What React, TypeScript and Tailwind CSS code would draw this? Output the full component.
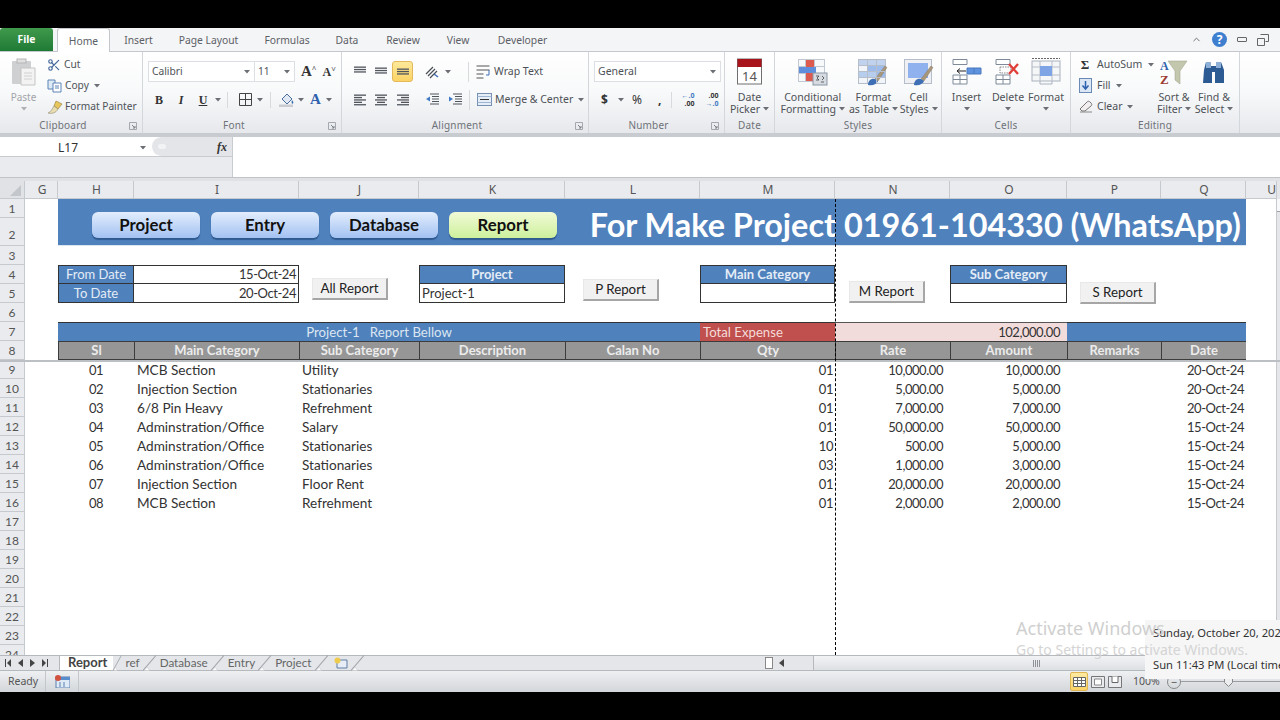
import type { ReactNode } from 'react';
import { Scissors, ChevronUp } from 'lucide-react';

const rows = [
  ['01', 'MCB Section', 'Utility', '01', '10,000.00', '10,000.00', '20-Oct-24'],
  ['02', 'Injection Section', 'Stationaries', '01', '5,000.00', '5,000.00', '20-Oct-24'],
  ['03', '6/8 Pin Heavy', 'Refrehment', '01', '7,000.00', '7,000.00', '20-Oct-24'],
  ['04', 'Adminstration/Office', 'Salary', '01', '50,000.00', '50,000.00', '15-Oct-24'],
  ['05', 'Adminstration/Office', 'Stationaries', '10', '500.00', '5,000.00', '15-Oct-24'],
  ['06', 'Adminstration/Office', 'Stationaries', '03', '1,000.00', '3,000.00', '15-Oct-24'],
  ['07', 'Injection Section', 'Floor Rent', '01', '20,000.00', '20,000.00', '15-Oct-24'],
  ['08', 'MCB Section', 'Refrehment', '01', '2,000.00', '2,000.00', '15-Oct-24'],
];
const emptyRows = [17, 18, 19, 20, 21, 22, 23, 24];
const colLetters = ['G', 'H', 'I', 'J', 'K', 'L', 'M', 'N', 'O', 'P', 'Q'];
const tabs = [
  ['Insert', 'w-[57px]'],
  ['Page Layout', 'w-[83px]'],
  ['Formulas', 'w-[74px]'],
  ['Data', 'w-[46px]'],
  ['Review', 'w-[66px]'],
  ['View', 'w-[44px]'],
  ['Developer', 'w-[85px]'],
];
const headers = ['Sl', 'Main Category', 'Sub Category', 'Description', 'Calan No', 'Qty', 'Rate', 'Amount', 'Remarks', 'Date'];
const noLauncher = ['Date', 'Styles', 'Cells', 'Editing'];

// Lato digits run wider than Calibri, so numbers get squeezed a little
const numCls = 'text-[13px] tracking-[-0.45px]';

function Caret({ className = '' }: { className?: string }) {
  return (
    <svg width="6" height="4" viewBox="0 0 6 4" className={`shrink-0 ${className}`}>
      <path d="M0 0h6L3 3.500z" fill="#6b6f75" />
    </svg>
  );
}

function Launcher() {
  return (
    <svg width="8" height="8" viewBox="0 0 8 8" className="absolute right-[5px] top-[4px]">
      <path d="M.5.5h7v7h-7z" fill="none" stroke="#a4a8ae" />
      <path d="M3 3l3 3M6 4v2H4" fill="none" stroke="#7d8188" />
    </svg>
  );
}

function Group({ label, width, children }: { label: string; width: string; children: ReactNode }) {
  const launcher = !noLauncher.includes(label);
  return (
    <div className={`${width} flex flex-col border-r border-[#d3d6db] shrink-0`}>
      <div className="h-[66px] flex">{children}</div>
      <div className={`h-[15px] relative text-center text-[10px] leading-[14px] text-[#6e7278] tracking-[0.2px] ${launcher ? 'pr-[16px]' : ''}`}>
        {label}
        {launcher && <Launcher />}
      </div>
    </div>
  );
}

function BigButton({ icon, top, bottom, width, caretLine }: { icon: ReactNode; top: string; bottom?: string; width: string; caretLine?: boolean }) {
  return (
    <div className={`${width} flex flex-col items-center pt-[6px] leading-[12px] text-[10.6px] text-[#4e5257]`}>
      <div className="h-[27px] flex items-center justify-center mb-[6px]">{icon}</div>
      <span>{top}</span>
      {caretLine ? (
        <Caret className="mt-[4px]" />
      ) : (
        <span className="flex items-center gap-[3px] whitespace-nowrap">
          {bottom}
          <Caret />
        </span>
      )}
    </div>
  );
}

function Lines({ rows }: { rows: [number, number][] }) {
  return (
    <svg width="14" height="12" viewBox="0 0 14 12">
      {rows.map(([x, w], i) => (
        <rect key={i} x={x} y={i * 2.4 + 0.5} width={w} height="1.3" fill="#50555c" />
      ))}
    </svg>
  );
}

const leftAlign: [number, number][] = [[1, 12], [1, 8], [1, 12], [1, 8], [1, 12]];
const centerAlign: [number, number][] = [[1, 12], [3, 8], [1, 12], [3, 8], [1, 12]];
const rightAlign: [number, number][] = [[1, 12], [5, 8], [1, 12], [5, 8], [1, 12]];

function IndentIcon({ flip }: { flip?: boolean }) {
  return (
    <svg width="15" height="13" viewBox="0 0 15 13">
      <path d="M5 1h9M7 3.500h7M7 6h7M7 8.500h7M5 11h9" stroke="#50555c" strokeWidth="1.200" fill="none" />
      <path d={flip ? 'M5 3.500v5L1 6z' : 'M1 3.500v5L5 6z'} fill="#3f78c4" />
    </svg>
  );
}

function GridIcon({ fill = '#dbe6f5', children }: { fill?: string; children?: ReactNode }) {
  return (
    <svg width="30" height="28" viewBox="0 0 30 28">
      <rect x=".5" y="1.500" width="27" height="24" fill={fill} stroke="#b6bec9" />
      {children}
      <path d="M.5 7.500h27M.5 13.500h27M.5 19.500h27M9.500 1.500v24M18.500 1.500v24" stroke="#b6bec9" fill="none" />
    </svg>
  );
}

const brush = (
  <>
    <path d="M17 21L27 8l2 1.500-9 13.500z" fill="#a8977a" stroke="#7d6e55" strokeWidth=".4" />
    <path d="M10 27c0-4 3-7 7-6l3 2c-1 3-5 5-10 4z" fill="#3f6fb5" />
  </>
);

function PlainButton({ label }: { label: string }) {
  return (
    <div className="w-[76px] h-[22px] bg-[#f1f1f1] border-r-2 border-b-2 border-[#a6a6a6] border-t border-l border-t-[#e8e8e8] border-l-[#e8e8e8] flex items-center justify-center text-[13.3px] text-[#222]">
      {label}
    </div>
  );
}

function NavButton({ label, active }: { label: string; active?: boolean }) {
  return (
    <div className={`w-[108px] h-[26px] rounded-[6px] flex items-center justify-center text-[16.8px] font-bold text-[#111] shadow-[0_2px_1px_#2f5a8f] ${active ? 'bg-gradient-to-b from-[#f1fad6] to-[#cdf09c]' : 'bg-gradient-to-b from-[#e3edfc] to-[#a3c2f2]'}`}>
      {label}
    </div>
  );
}

function Num({ n, className = 'items-center pt-[1px]' }: { n: number; className?: string }) {
  return (
    <div className={`bg-[#e9ebee] border-b border-r border-[#c6c9ce] flex justify-center text-[12px] text-[#555] ${className}`}>
      {n}
    </div>
  );
}

function SheetTab({ label, bold }: { label: string; bold?: boolean }) {
  return (
    <div className={`flex items-center h-full ${bold ? 'bg-white text-[13px] font-bold text-[#444] pl-[8px] pr-[6px]' : 'text-[11.7px] text-[#666] px-[3px]'}`}>
      {label}
    </div>
  );
}

function Slant({ width = 14 }: { width?: number }) {
  return (
    <svg width={width} height="16" viewBox="0 0 13 16" preserveAspectRatio="none" className="shrink-0">
      <path d="M0 15.500L12 .5" stroke="#9da1a7" fill="none" />
      <path d="M1 15.500h5L4 12z" fill="#fff" stroke="#c0c3c8" strokeWidth=".5" />
    </svg>
  );
}

export default function App() {
  return (
    <div className="w-[1280px] h-[720px] bg-black overflow-hidden flex flex-col font-['Noto_Sans',sans-serif]">
      <div className="h-[28px] shrink-0" />

      {/* tab strip */}
      <div className="h-[24px] shrink-0 bg-[#f4f5f6] border-b border-[#c4c7cc] flex items-end text-[10.3px] text-[#5c6066]">
        <div className="w-[53px] h-[23px] rounded-t-[3px] bg-gradient-to-b from-[#3f9a4c] to-[#1f7a35] text-white font-bold flex items-center justify-center">File</div>
        <div className="w-[53px] h-[24px] ml-[4px] -mb-px pt-[2px] bg-white border border-b-0 border-[#c4c7cc] rounded-t-[3px] flex items-center justify-center">Home</div>
        {tabs.map(([label, w]) => (
          <div key={label} className={`${w} h-[23px] pt-[2px] flex items-center justify-center`}>{label}</div>
        ))}
        <div className="ml-auto h-[23px] flex items-center gap-[10px] pr-[11px]">
          <ChevronUp size={11} strokeWidth={2} className="text-[#666]" />
          <div className="w-[15px] h-[15px] rounded-full bg-[#3f7fd0] text-white text-[12px] font-bold flex items-center justify-center">?</div>
          <div className="w-[10px] h-[5px] rounded-[1px] border border-[#666]" />
          <svg width="12" height="12" viewBox="0 0 12 12"><path d="M3.500.5h8v7h-3M.5 4.500h7v7h-7z" fill="none" stroke="#666" /></svg>
        </div>
      </div>

      {/* ribbon */}
      <div className="h-[81px] shrink-0 bg-gradient-to-b from-white via-[#f8f9fa] to-[#e6e8ec] flex text-[10.2px] text-[#4e5257]">
        <Group label="Clipboard" width="w-[143px]">
          <div className="w-[47px] flex flex-col items-center pt-[6px] text-[10px] text-[#a2a5a9] leading-[12px]">
            <svg width="26" height="28" viewBox="0 0 26 28" className="mb-[5px]">
              <rect x="1" y="3" width="19" height="23" rx="1" fill="#cfd0d2" />
              <rect x="6" y="1" width="9" height="4" fill="#e0e0e0" stroke="#b5b5b5" />
              <path d="M10 10h14v17H10z" fill="#f3f3f3" stroke="#c5c5c5" />
              <path d="M13 15h8M13 18h8M13 21h8" stroke="#d0d0d0" />
            </svg>
            <span>Paste</span>
            <Caret className="mt-[4px] opacity-50" />
          </div>
          <div className="flex flex-col pt-[2px]">
            <div className="h-[21px] flex items-center gap-[3px]"><Scissors size={14} className="text-[#44689c]" />Cut</div>
            <div className="h-[21px] flex items-center gap-[3px]">
              <svg width="15" height="14" viewBox="0 0 15 14"><path d="M1 1h7v9H1z" fill="#dfeaf7" stroke="#5d83b5" /><path d="M6 4h8v9H6z" fill="#fff" stroke="#5d83b5" /><path d="M8 7h4M8 9h4" stroke="#5d83b5" /></svg>
              Copy <Caret className="ml-[2px]" />
            </div>
            <div className="h-[21px] flex items-center gap-[2px] whitespace-nowrap">
              <svg width="16" height="14" viewBox="0 0 16 14"><path d="M9 1l6 3-4 5-4-3z" fill="#e8c65a" stroke="#8d7a3d" strokeWidth=".6" /><path d="M7 6l4 3c-2 4-6 5-10 4 3-1 4-4 6-7z" fill="#e9ddb0" stroke="#8f8a70" strokeWidth=".6" /></svg>
              Format Painter
            </div>
          </div>
        </Group>

        <Group label="Font" width="w-[199px]">
          <div className="flex flex-col pl-[5px] pt-[9px]">
            <div className="h-[21px] flex items-center">
              <div className="w-[107px] h-[21px] bg-white border border-[#dcdfe3] flex items-center justify-between pl-[3px] pr-[4px]">Calibri<Caret /></div>
              <div className="w-[40px] h-[21px] bg-white border border-l-0 border-[#dcdfe3] flex items-center justify-between pl-[3px] pr-[4px]">11<Caret /></div>
              <span className="ml-[6px] text-[15px] font-bold font-['Liberation_Serif',serif] text-[#333]">A<sup className="text-[8px]">^</sup></span>
              <span className="ml-[6px] text-[12px] font-bold font-['Liberation_Serif',serif] text-[#333]">A<sup className="text-[8px]">˅</sup></span>
            </div>
            <div className="h-[17px] mt-[9px] flex items-center text-[#333] font-['Liberation_Serif',serif] text-[12px]">
              <span className="w-[10px] ml-[6px] font-bold text-center">B</span>
              <span className="w-[10px] ml-[12px] font-bold italic text-center">I</span>
              <span className="w-[10px] ml-[12px] font-bold underline text-center">U</span>
              <Caret className="ml-[7px]" />
              <div className="w-px h-[16px] bg-[#d8dade] ml-[6px]" />
              <svg width="13" height="13" viewBox="0 0 13 13" className="ml-[11px]"><path d="M.5.5h12v12H.5zM6.500.5v12M.5 6.500h12" fill="none" stroke="#444" /></svg>
              <Caret className="ml-[5px]" />
              <div className="w-px h-[16px] bg-[#d8dade] ml-[7px]" />
              <svg width="16" height="15" viewBox="0 0 16 15" className="ml-[8px]"><path d="M3 7l5-5 5 5-5 5z" fill="#dfe8f3" stroke="#4c6f9e" /><path d="M13 8c1 1.500 2 2.500 1 3.500s-2-1-1-3.500z" fill="#3a6fb0" /><rect x="0" y="12.500" width="14" height="2.500" fill="#c9ccd1" /></svg>
              <Caret className="ml-[3px]" />
              <span className="ml-[6px] text-[15px] font-bold text-[#2f62ad]">A</span>
              <Caret className="ml-[5px]" />
            </div>
          </div>
        </Group>

        <Group label="Alignment" width="w-[247px]">
          <div className="flex flex-col pl-[7px] pt-[9px]">
            <div className="h-[21px] flex items-center">
              <div className="w-[21px] flex justify-center"><Lines rows={[[1, 12], [1, 12], [1, 12]]} /></div>
              <div className="w-[22px] flex justify-center pt-[3px]"><Lines rows={[[1, 12], [1, 12], [1, 12]]} /></div>
              <div className="w-[21px] h-[21px] rounded-[3px] bg-gradient-to-b from-[#fde99a] to-[#fbd365] border border-[#e3b95b] flex justify-center items-end pb-[1px]"><Lines rows={[[1, 12], [1, 12], [1, 12]]} /></div>
              <svg width="20" height="14" viewBox="0 0 20 14" className="ml-[11px]"><path d="M2 9l7-7M4 11l7-7M6 13l7-7" stroke="#4a4e55" strokeWidth="1.200" /><path d="M10 9l4 3" stroke="#3f6fb5" strokeWidth="1.500" /></svg>
              <Caret className="ml-[1px]" />
              <div className="w-px h-[20px] bg-[#d8dade] ml-[17px]" />
              <div className="flex items-center gap-[3px] ml-[7px] text-[10.5px]">
                <svg width="15" height="14" viewBox="0 0 15 14"><path d="M.5 1h13M.5 5h13M.5 9h7M.5 13h7" stroke="#555" fill="none" /><path d="M13 5v5h-3" stroke="#3f6fb5" fill="none" /></svg>
                Wrap Text
              </div>
            </div>
            <div className="h-[17px] mt-[9px] flex items-center">
              <div className="w-[21px] flex justify-center"><Lines rows={leftAlign} /></div>
              <div className="w-[22px] flex justify-center"><Lines rows={centerAlign} /></div>
              <div className="w-[21px] flex justify-center"><Lines rows={rightAlign} /></div>
              <div className="w-[23px] ml-[8px] flex justify-center"><IndentIcon flip /></div>
              <div className="w-[23px] flex justify-center"><IndentIcon /></div>
              <div className="w-px h-[20px] bg-[#d8dade] ml-[2px]" />
              <div className="flex items-center gap-[3px] ml-[7px] whitespace-nowrap text-[10.5px]">
                <svg width="15" height="13" viewBox="0 0 15 13"><rect x=".5" y=".5" width="14" height="12" fill="#e6eef8" stroke="#7690b4" /><path d="M3 6.500h9" stroke="#333" /><path d="M.5 3.500h14M.5 9.500h14" stroke="#9db4d3" /></svg>
                Merge &amp; Center <Caret className="ml-[2px]" />
              </div>
            </div>
          </div>
        </Group>

        <Group label="Number" width="w-[136px]">
          <div className="flex flex-col pl-[5px] pt-[9px]">
            <div className="w-[127px] h-[21px] bg-white border border-[#dcdfe3] flex items-center justify-between pl-[3px] pr-[4px] text-[10.5px]">General<Caret /></div>
            <div className="h-[17px] mt-[9px] flex items-center text-[#333] font-bold text-[12px]">
              <span className="ml-[7px] w-[8px]">$</span>
              <Caret className="ml-[9px]" />
              <span className="ml-[8px] text-[12px] font-normal">%</span>
              <span className="ml-[16px]">,</span>
              <div className="w-px h-[16px] bg-[#d8dade] ml-[10px]" />
              <div className="ml-[7px] w-[15px] text-[7px] leading-[8px] text-[#333] text-right whitespace-nowrap"><span className="block text-[#3f78c4]">←.0</span><span className="block">.00</span></div>
              <div className="ml-[9px] w-[15px] text-[7px] leading-[8px] text-[#333] text-right whitespace-nowrap"><span className="block">.00</span><span className="block text-[#3f78c4]">→.0</span></div>
            </div>
          </div>
        </Group>

        <Group label="Date" width="w-[50px]">
          <BigButton
            width="w-full"
            top="Date"
            bottom="Picker"
            icon={
              <svg width="26" height="27" viewBox="0 0 26 27">
                <rect x=".5" y="1" width="24" height="25" fill="#fff" stroke="#6f6f6f" />
                <rect x=".5" y="1" width="24" height="8" fill="#a8141c" />
                <text x="12.500" y="23" textAnchor="middle" fontSize="13" fill="#555" fontFamily="Noto Sans">14</text>
              </svg>
            }
          />
        </Group>

        <Group label="Styles" width="w-[167px]">
          <BigButton
            width="w-[76px]"
            top="Conditional"
            bottom="Formatting"
            icon={
              <svg width="30" height="28" viewBox="0 0 30 28">
                <rect x=".5" y="1.500" width="26" height="22" fill="#f7f8fa" stroke="#c2c8d1" />
                <path d="M.5 8.500h26M.5 15.500h26M7.500 1.500v22M16.500 1.500v22" stroke="#c2c8d1" />
                <rect x="8" y="2" width="8" height="21" fill="#dd5a4f" />
                <rect x="1" y="9" width="17" height="6" fill="#5f8fdc" />
                <rect x="15" y="15" width="14" height="12" fill="#d6dbe2" stroke="#8b95a3" />
                <path d="M18 18h3l-2 2 2 2h-3M24 18l2 2-2 2M23 24h3" stroke="#444" fill="none" strokeWidth=".8" />
              </svg>
            }
          />
          <BigButton
            width="w-[46px]"
            top="Format"
            bottom="as Table"
            icon={
              <GridIcon fill="#f1f4f8">
                <rect x="1" y="2" width="26" height="5" fill="#c0d2ee" />
                <rect x="10" y="8" width="17" height="11" fill="#9dbcec" />
                <rect x="1" y="14" width="18" height="5" fill="#b7cdee" />
                {brush}
              </GridIcon>
            }
          />
          <BigButton
            width="w-[45px]"
            top="Cell"
            bottom="Styles"
            icon={
              <svg width="30" height="28" viewBox="0 0 30 28">
                <rect x=".5" y="1.500" width="27" height="24" fill="#eef0f3" stroke="#b6bec9" />
                <rect x="4" y="5" width="20" height="15" fill="#8fb1ee" />
                {brush}
              </svg>
            }
          />
        </Group>

        <Group label="Cells" width="w-[129px]">
          <BigButton
            width="w-[49px]"
            top="Insert"
            caretLine
            icon={
              <svg width="30" height="28" viewBox="0 0 30 28">
                <path d="M1 1.500h14v5H1zM1 17h14v9H1zM8 17v9M1 21.500h14" fill="#fff" stroke="#7f8a98" />
                <path d="M15 10h14v6H15zM22 10v6" fill="#5f93e0" stroke="#4a78bd" />
                <path d="M5 13h9M5 13l3-2.500M5 13l3 2.500" stroke="#222" fill="none" />
              </svg>
            }
          />
          <BigButton
            width="w-[34px]"
            top="Delete"
            caretLine
            icon={
              <svg width="26" height="28" viewBox="0 0 26 28">
                <path d="M1 1.500h14v5H1zM1 17h14v9H1zM8 17v9M1 21.500h14" fill="#fff" stroke="#7f8a98" />
                <path d="M5 9h11v6H5z" fill="none" stroke="#888" strokeDasharray="1.500 1" />
                <path d="M14 6l9 10M23 6l-9 10" stroke="#e0413b" strokeWidth="2.400" />
              </svg>
            }
          />
          <BigButton
            width="w-[42px]"
            top="Format"
            caretLine
            icon={
              <svg width="30" height="28" viewBox="0 0 30 28">
                <rect x="1" y="3" width="28" height="20" fill="#f5f6f8" stroke="#a9b2be" />
                <path d="M9 3v20M21 3v20M1 9h28M1 17h28" stroke="#b6bec9" />
                <rect x="9" y="8" width="12" height="10" fill="#7ea4e6" />
                <path d="M1 .5h28" stroke="#666" strokeDasharray="2 1" />
                <path d="M9 23v3h12v-3" fill="none" stroke="#a9b2be" />
              </svg>
            }
          />
        </Group>

        <Group label="Editing" width="w-[169px]">
          <div className="w-[80px] flex flex-col pt-[2px] pl-[8px] text-[10.5px]">
            <div className="h-[21px] flex items-center gap-[6px] whitespace-nowrap">
              <span className="w-[12px] shrink-0 text-[13px] text-center font-bold font-['Liberation_Serif',serif] text-[#333]">Σ</span>
              AutoSum <Caret />
            </div>
            <div className="h-[21px] flex items-center gap-[5px]">
              <svg width="13" height="15" viewBox="0 0 13 15"><rect x=".5" y=".5" width="12" height="14" fill="#dce7f6" stroke="#6a8ab5" /><path d="M6.500 3v7M3.500 7.500l3 3.500 3-3.500" stroke="#2f62ad" strokeWidth="1.500" fill="none" /></svg>
              Fill <Caret />
            </div>
            <div className="h-[21px] flex items-center gap-[4px]">
              <svg width="14" height="13" viewBox="0 0 14 13"><path d="M1 9l7-7c1-1 2-1 3 0l1 1c1 1 1 2 0 3l-6 5H3z" fill="#f3eef0" stroke="#777" /><path d="M1 12h12" stroke="#888" /></svg>
              Clear <Caret />
            </div>
          </div>
          <BigButton
            width="w-[46px]"
            top="Sort &"
            bottom="Filter"
            icon={
              <svg width="30" height="28" viewBox="0 0 30 28">
                <text x="1" y="12" fontSize="12" fontWeight="bold" fill="#2f62ad" fontFamily="Liberation Serif">A</text>
                <text x="1" y="26" fontSize="13" fontWeight="bold" fill="#9c3a30" fontFamily="Liberation Serif">Z</text>
                <path d="M9 3h19l-7 10v13l-5-4v-9z" fill="#c3c7ad" stroke="#9a9e86" strokeWidth=".5" />
              </svg>
            }
          />
          <BigButton
            width="w-[34px]"
            top="Find &"
            bottom="Select"
            icon={
              <svg width="28" height="28" viewBox="0 0 28 28">
                <path d="M4 12l2-8h5v4h5V4h5l3 8v13h-9V14h-3v11H3z" fill="#2c5a92" />
                <path d="M6 4h5v6H6zM16 4h5v6h-5z" fill="#8fb0d6" />
              </svg>
            }
          />
        </Group>
      </div>
      <div className="h-[4px] shrink-0 bg-[#c8cbd0]" />

      {/* formula bar */}
      <div className="h-[40px] shrink-0 bg-white flex text-[#333]">
        <div className="w-[233px] flex flex-col border-r border-[#c8cbd0]">
          <div className="h-[20px] flex border-b border-[#c8cbd0] bg-white">
            <div className="w-[152px] flex items-center text-[12px] pt-[2px] pl-[58px] pr-[6px] justify-between">L17<Caret /></div>
            <div className="flex-1 bg-[#e3e5e9] rounded-l-[10px] flex items-center justify-between pl-[6px] pr-[5px]">
              <div className="w-[8px] h-[5px] rounded-full bg-[#f2f3f5]" />
              <span className="font-['Liberation_Serif',serif] italic font-bold text-[12px]">fx</span>
            </div>
          </div>
          <div className="flex-1 bg-[#e9ebee]" />
        </div>
      </div>
      <div className="h-[4px] shrink-0 bg-[#dfe1e5] border-t border-[#c0c3c8]" />

      {/* sheet */}
      <div className="h-[474px] shrink-0 bg-white overflow-hidden relative font-['Lato',sans-serif] text-[13.6px] text-[#333] flex">
        <div className="flex-1 grid grid-cols-[25px_33px_76px_165px_120px_146px_135px_135px_115px_117px_94px_85px_30px] grid-rows-[18px_19px_28px_repeat(22,19px)]">
          <div className="bg-[#e0e2e6] border-r border-b border-[#c6c9ce] relative overflow-hidden">
            <div className="absolute right-[3px] bottom-[2px] w-0 h-0 border-l-[11px] border-l-transparent border-b-[11px] border-b-[#c3c6cb]" />
          </div>
          {colLetters.map((c) => (
            <div key={c} className="bg-[#e9ebee] border-r border-b border-[#c6c9ce] flex items-center justify-center pl-[2px] text-[12px] text-[#555] font-['Noto_Sans',sans-serif]">{c}</div>
          ))}
          <div className="bg-[#e9ebee] border-b border-[#c6c9ce] flex items-center justify-end text-[12px] text-[#555] font-['Noto_Sans',sans-serif]">U</div>

          <Num n={1} />
          <div />
          <div className="col-span-10 row-span-2 bg-[#4f81bd] flex items-center pl-[34px] pr-[5px] pt-[6px] gap-[11px] border-b border-[#dce6f1]">
            <NavButton label="Project" />
            <NavButton label="Entry" />
            <NavButton label="Database" />
            <NavButton label="Report" active />
            <div className="ml-auto text-[32.4px] leading-[36px] font-bold text-white whitespace-nowrap">For Make Project 01961-104330 (WhatsApp)</div>
          </div>
          <div />

          <Num n={2} className="items-end pb-[1px]" />
          <div />
          <div />

          <Num n={3} />
          <div className="col-span-12" />

          <Num n={4} />
          <div />
          <div className="bg-[#4f81bd] border border-[#333] pt-[1px] text-[13px] text-[#e4ecf6] flex items-center justify-center">From Date</div>
          <div className={`border-y border-r border-[#333] pt-[1px] flex items-center justify-end pr-[2px] ${numCls}`}>15-Oct-24</div>
          <div className="row-span-2 pl-[13px] pt-[13px]"><PlainButton label="All Report" /></div>
          <div className="bg-[#4f81bd] border border-[#333] pt-[1px] text-[13px] text-[#e4ecf6] font-bold flex items-center justify-center">Project</div>
          <div className="row-span-2 pl-[18px] pt-[14px]"><PlainButton label="P Report" /></div>
          <div className="bg-[#4f81bd] border border-[#333] pt-[1px] text-[13px] text-[#e4ecf6] font-bold flex items-center justify-center">Main Category</div>
          <div className="row-span-2 pl-[14px] pt-[16px]"><PlainButton label="M Report" /></div>
          <div className="bg-[#4f81bd] border border-[#333] pt-[1px] text-[13px] text-[#e4ecf6] font-bold flex items-center justify-center">Sub Category</div>
          <div className="row-span-2 pl-[13px] pt-[17px]"><PlainButton label="S Report" /></div>
          <div />
          <div />

          <Num n={5} />
          <div />
          <div className="bg-[#4f81bd] border-x border-b border-[#333] pt-[1px] text-[13px] text-[#e4ecf6] flex items-center justify-center">To Date</div>
          <div className={`border-b border-r border-[#333] pt-[2px] flex items-center justify-end pr-[2px] ${numCls}`}>20-Oct-24</div>
          <div className="border-x border-b border-[#333] pt-[2px] text-[13px] flex items-center pl-[2px]">Project-1</div>
          <div className="border-x border-b border-[#333]" />
          <div className="border-x border-b border-[#333]" />
          <div />
          <div />

          <Num n={6} />
          <div className="col-span-12" />

          <Num n={7} />
          <div />
          <div className="col-span-5 bg-[#4f81bd] border-t border-[#333] pt-[1px] text-[13.2px] text-[#dce6f1] flex items-center justify-center whitespace-pre">Project-1   Report Bellow</div>
          <div className="bg-[#c0504d] border-t border-[#333] pt-[1px] text-[13.2px] text-[#f4dcdb] flex items-center pl-[3px]">Total Expense</div>
          <div className={`col-span-2 bg-[#f2dcdb] border-t border-[#555] pt-[1px] flex items-center justify-end pr-[7px] ${numCls}`}>102,000.00</div>
          <div className="col-span-2 bg-[#4f81bd] border-t border-[#333]" />
          <div />

          <Num n={8} />
          <div />
          {headers.map((h) => (
            <div key={h} className="bg-[#969696] border-t border-l border-b border-[#3c3c3c] last:border-r pt-[1px] text-[13px] font-bold text-[#ececec] flex items-center justify-center">{h}</div>
          ))}
          <div />

          {rows.map((r, i) => (
            <div key={r[0]} className="contents">
              <Num n={i + 9} />
              <div />
              <div className={`flex items-center justify-center pt-[2px] ${numCls}`}>{r[0]}</div>
              <div className="flex items-center pl-[3px] pt-[1px] whitespace-nowrap">{r[1]}</div>
              <div className="flex items-center pl-[3px] pt-[1px]">{r[2]}</div>
              <div />
              <div />
              <div className={`flex items-center justify-end pr-[2px] pt-[2px] ${numCls}`}>{r[3]}</div>
              <div className={`flex items-center justify-end pr-[7px] pt-[2px] ${numCls}`}>{r[4]}</div>
              <div className={`flex items-center justify-end pr-[7px] pt-[2px] ${numCls}`}>{r[5]}</div>
              <div />
              <div className={`flex items-center justify-end pr-[2px] pt-[2px] ${numCls}`}>{r[6]}</div>
              <div />
            </div>
          ))}

          {emptyRows.map((n) => (
            <div key={n} className="contents">
              <Num n={n} />
              <div className="col-span-12" />
            </div>
          ))}
        </div>
        <div className="w-[4px] bg-[#e4e6ea] border-l border-[#c6c9ce]">
          <div className="h-[13px] mt-[18px] bg-[#f7f8f9] border-b border-[#9da1a7]" />
        </div>

        {/* freeze pane line and page break, both drawn over the cells */}
        <div className="absolute left-0 right-0 top-[179px] h-[2px] bg-[#bcbfc4]" />
        <div className="absolute left-[835px] top-[18px] bottom-0 border-l border-dashed border-black" />
      </div>

      {/* sheet tabs + horizontal scrollbar */}
      <div className="h-[16px] shrink-0 bg-[#e4e6ea] border-y border-[#b5b8bd] flex items-center font-['Lato',sans-serif]">
        <div className="w-[60px] h-full flex items-center pl-[5px] gap-[7px] border-r border-[#b5b8bd]">
          <svg width="6" height="8" viewBox="0 0 6 8"><path d="M.5 0v8" stroke="#444" /><path d="M6 0v8L2 4z" fill="#444" /></svg>
          <svg width="5" height="8" viewBox="0 0 5 8"><path d="M5 0v8L0 4z" fill="#444" /></svg>
          <svg width="5" height="8" viewBox="0 0 5 8"><path d="M0 0v8l5-4z" fill="#444" /></svg>
          <svg width="6" height="8" viewBox="0 0 6 8"><path d="M5.500 0v8" stroke="#444" /><path d="M0 0v8l4-4z" fill="#444" /></svg>
        </div>
        <SheetTab label="Report" bold />
        <Slant width={9} />
        <SheetTab label="ref" />
        <Slant />
        <SheetTab label="Database" />
        <Slant />
        <SheetTab label="Entry" />
        <Slant />
        <SheetTab label="Project" />
        <Slant />
        <svg width="14" height="13" viewBox="0 0 14 13" className="ml-[5px] mr-[3px] shrink-0">
          <path d="M3 3h10v8H3z" fill="#e7edf6" stroke="#5f7da6" />
          <circle cx="3.500" cy="3.500" r="3" fill="#efcb4d" />
        </svg>
        <Slant />
        <div className="ml-auto w-[8px] h-[12px] border border-[#888] bg-white" />
        <svg width="6" height="8" viewBox="0 0 6 8" className="ml-[6px]"><path d="M5 0v8L0 4z" fill="#444" /></svg>
        <div className="ml-[28px] mr-[20px] w-[447px] h-full bg-gradient-to-b from-[#f2f3f5] to-[#dde0e4] border-x border-[#b5b8bd] flex items-center justify-center">
          <div className="w-[7px] h-[7px] bg-[repeating-linear-gradient(90deg,#8e9197_0,#8e9197_1px,transparent_1px,transparent_2px)]" />
        </div>
      </div>

      {/* status bar */}
      <div className="h-[21px] shrink-0 bg-gradient-to-b from-[#eef0f2] to-[#d3d6da] flex items-center text-[10.5px] text-[#555]">
        <div className="w-[46px] h-full flex items-center pl-[8px] border-r border-[#c3c6ca]">Ready</div>
        <div className="w-[33px] h-full flex items-center justify-center border-r border-[#c3c6ca]">
          <svg width="15" height="13" viewBox="0 0 15 13"><rect x="1" y="2" width="14" height="11" fill="#dfeaf7" stroke="#5b7fae" /><rect x="1" y="2" width="14" height="3" fill="#5a8dcc" /><circle cx="3" cy="3" r="3" fill="#d4503f" /><path d="M5 7v5M9 7v5" stroke="#5b7fae" /></svg>
        </div>
        <div className="ml-auto h-full flex items-center">
          <div className="w-[18px] h-[19px] rounded-[2px] bg-gradient-to-b from-[#fdeaa1] to-[#fbd264] border border-[#e0b552] flex items-center justify-center">
            <svg width="13" height="10" viewBox="0 0 13 10"><path d="M.5.5h12v9H.5zM4.500.5v9M8.500.5v9M.5 3.500h12M.5 6.500h12" fill="#fff" stroke="#666" /></svg>
          </div>
          <svg width="14" height="12" viewBox="0 0 14 12" className="ml-[3px]"><path d="M.5.5h13v11H.5z" fill="#e9ebee" stroke="#777" /><path d="M3.500 3h7v6h-7z" fill="#fff" stroke="#888" /></svg>
          <svg width="14" height="12" viewBox="0 0 14 12" className="ml-[3px]"><path d="M.5.5h13v11H.5z" fill="#e9ebee" stroke="#777" /><path d="M4 .5v6h6v-6" fill="#fff" stroke="#666" /></svg>
          <span className="ml-[11px] w-[26px]">100%</span>
          <div className="w-[14px] h-[14px] ml-[8px] rounded-full border border-[#888] flex items-center justify-center text-[11px] leading-none">−</div>
          <div className="w-[99px] h-px bg-[#9a9da2] relative">
            <svg width="9" height="9" viewBox="0 0 9 9" className="absolute left-[43px] -top-[3px]"><path d="M.5.5h8v4l-4 4-4-4z" fill="#eceef0" stroke="#888" /></svg>
          </div>
        </div>
      </div>
      <div className="flex-1" />

      {/* date tooltip and Windows watermark sit over the window */}
      <div className="absolute left-[1145px] top-[620px] w-[135px] h-[59px] bg-[#f6f6f6] text-[11.2px] text-[#333] pl-[8px] pt-[5px] overflow-hidden whitespace-nowrap font-['Noto_Sans',sans-serif]">
        <div>Sunday, October 20, 2024</div>
        <div className="mt-[15px]">Sun 11:43 PM (Local time)</div>
      </div>
      <div className="absolute left-[1016px] top-[615px] text-[18px] text-[#cfcfcf] whitespace-nowrap font-['Noto_Sans',sans-serif]">Activate Windows</div>
      <div className="absolute left-[1016px] top-[639px] text-[14px] text-[#d4d4d4] whitespace-nowrap font-['Noto_Sans',sans-serif]">Go to Settings to activate Windows.</div>
    </div>
  );
}
